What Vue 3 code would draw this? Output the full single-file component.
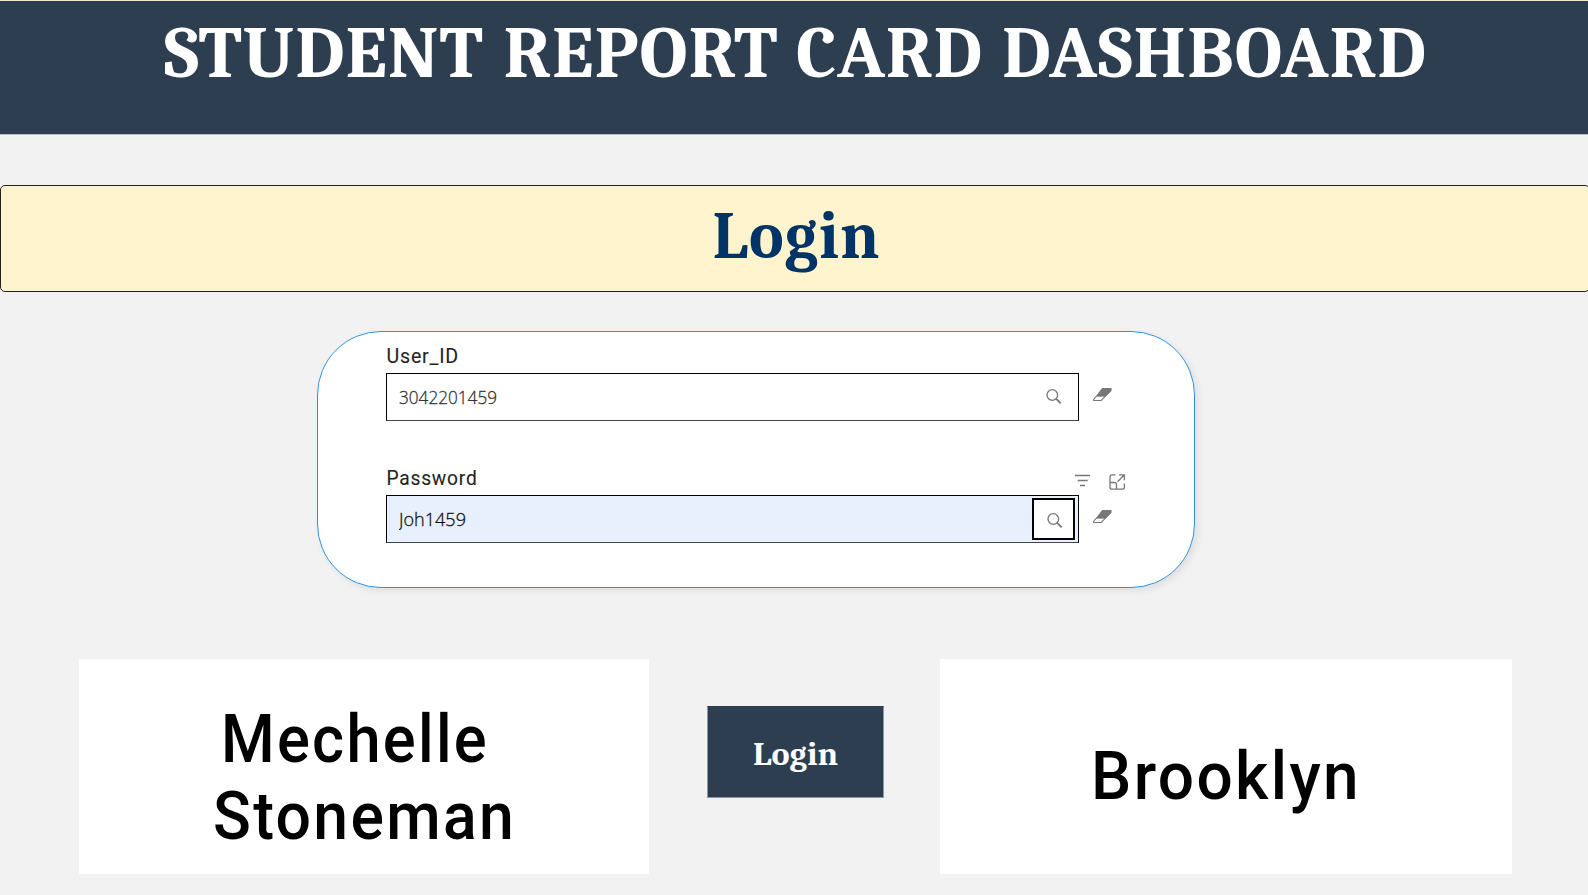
<script setup>
const titleWords = [
  { text: 'STUDENT', x: 164, width: 320 },
  { text: 'REPORT', x: 503.5, width: 275 },
  { text: 'CARD', x: 796, width: 187 },
  { text: 'DASHBOARD', x: 1002, width: 425 },
]

const fields = [
  { label: 'User_ID', labelWidth: 72.5, value: '3042201459', valueWidth: 98, active: false },
  { label: 'Password', labelWidth: 91, value: 'Joh1459', valueWidth: 67, active: true },
]
</script>

<template>
  <main class="page">
    <header class="header">
      <svg class="title" width="1588" height="132" role="heading">
        <text v-for="w in titleWords" :key="w.text" :x="w.x" y="76" :textLength="w.width" lengthAdjust="spacingAndGlyphs">{{ w.text }}</text>
      </svg>
    </header>

    <section class="banner">
      <svg width="1586" height="104" role="heading">
        <text x="711.5" y="71.5" textLength="168" lengthAdjust="spacingAndGlyphs">Login</text>
      </svg>
    </section>

    <section class="card">
      <div v-for="f in fields" :key="f.label" class="field">
        <div class="label-row">
          <svg class="label" width="120" height="30">
            <text x="-0.5" y="20.5" :textLength="f.labelWidth" lengthAdjust="spacingAndGlyphs">{{ f.label }}</text>
          </svg>
          <div v-if="f.active" class="tools">
            <svg width="16" height="16" viewBox="0 0 16 16"><path d="M0 1.500h15M2.700 6.500h10M5 11.500h5" /></svg>
            <svg width="17" height="17" viewBox="0 0 17 17">
              <path d="M6.500.8H3a2 2 0 0 0-2 2v10.400a2 2 0 0 0 2 2h10.400a2 2 0 0 0 2-2V9.500M1 8.500h4.500a2 2 0 0 1 2 2v4.700M8.500 7.700L15.200 1M10 .8h5.400v5.400" />
            </svg>
          </div>
        </div>
        <div class="input-row">
          <div class="input" :class="{ active: f.active }">
            <svg class="value" width="140" height="46">
              <text x="0" y="29.5" :textLength="f.valueWidth" lengthAdjust="spacingAndGlyphs">{{ f.value }}</text>
            </svg>
            <div class="search">
              <svg width="16" height="16" viewBox="0 0 16 16"><circle cx="6.300" cy="6" r="5.300" /><path class="handle" d="M10 9.700l4.600 4.600" /></svg>
            </div>
          </div>
          <svg class="eraser" width="19" height="14" viewBox="0 0 19 14">
            <path class="fill" d="M9.300.5H18v2.400L12.500 8.500H3.300z" />
            <path d="M4 7.700L.7 11.200v1.300h7.500L18 2.600V.6H9.500L4 7.700h8" />
          </svg>
        </div>
      </div>
    </section>

    <section class="bottom">
      <div class="tile name">
        <svg width="569" height="215">
          <text x="142" y="102.5" textLength="268" lengthAdjust="spacingAndGlyphs">Mechelle</text>
          <text x="134" y="179.5" textLength="303" lengthAdjust="spacingAndGlyphs">Stoneman</text>
        </svg>
      </div>
      <button class="login">
        <svg width="175" height="90">
          <text x="45" y="57.5" textLength="85" lengthAdjust="spacingAndGlyphs">Login</text>
        </svg>
      </button>
      <div class="tile city">
        <svg width="572" height="215">
          <text x="151" y="139.5" textLength="270" lengthAdjust="spacingAndGlyphs">Brooklyn</text>
        </svg>
      </div>
    </section>
  </main>
</template>

<style>
body { margin: 0; background: #f2f2f2; overflow: hidden; }
</style>

<style scoped>
* { box-sizing: border-box; }
svg { display: block; flex: none; }
.page { width: 1588px; height: 895px; background: #f2f2f2; border-top: 1px solid #f3e7ce; overflow: hidden; }
.header { height: 134px; background: #2d3e50; border-bottom: 1px solid #b5bdc9; }
.header text, .banner text, .login text { font-family: Cambria, Caladea, "DejaVu Serif Condensed", "DejaVu Serif", serif; font-weight: 700; }
.title text { font-size: 73.500px; fill: #fff; letter-spacing: 1px; }
.banner { width: 1590px; height: 107px; margin-top: 50px; background: #fff4cd; border: 1px solid #222; border-radius: 5px; }
.banner text { font-size: 66px; fill: #003366; letter-spacing: 1px; }
.card { width: 878px; height: 257px; margin: 39px 0 0 317px; padding: 10px 0 0 68px; background: #fff; border: 1px solid #2f93db; border-radius: 64px; box-shadow: 3px 3px 7px rgba(0, 0, 0, .08); }
.field { height: 122px; }
.label-row { display: flex; justify-content: space-between; width: 741px; height: 31px; padding-left: 1px; }
.label text { font-family: Roboto, sans-serif; font-size: 19.800px; letter-spacing: .8px; fill: #252423; stroke: #252423; stroke-width: .1px; }
.tools { display: flex; gap: 18px; padding: 10px 1px 0 0; }
.tools path { fill: none; stroke: #777; stroke-width: 1.300; }
.input-row { display: flex; align-items: flex-start; }
.input { display: flex; justify-content: space-between; width: 693px; height: 48px; padding-left: 12px; border: 1px solid #000; border-bottom-color: #444; }
.input.active { background: #e8f0fe; }
.value text { font-family: "Segoe UI", "Open Sans", "Noto Sans", sans-serif; font-size: 18.500px; font-weight: 300; fill: #333; stroke: #333; stroke-width: .3px; }
.active .value text { fill: #111; stroke: #111; }
.search { width: 43px; height: 42px; margin: 2px 3px 0 0; padding: 13px 0 0 14px; }
.active .search { background: #fff; border: 2px solid #000; padding: 13px 0 0 13px; }
.search circle, .search path { fill: none; stroke: #777; stroke-width: 1.300; }
.search .handle { stroke-width: 1.900; }
.eraser { margin: 15px 0 0 14px; }
.eraser path { fill: none; stroke: #777; stroke-width: 1.100; }
.eraser .fill { fill: #777; stroke: none; }
.bottom { display: flex; align-items: flex-start; margin: 71px 0 0 79px; }
.tile { height: 215px; background: #fff; }
.name { width: 570px; }
.city { width: 572px; }
.tile text { font-family: Roboto, sans-serif; font-size: 67.500px; font-weight: 500; letter-spacing: 2.500px; fill: #000; }
.login { width: 177px; height: 92px; margin: 47px 56px 0 58px; padding: 0; background: #2d3e50; border: 1px solid #8d98a6; border-top-color: #2d3e50; }
.login text { font-size: 33px; fill: #fff; }
</style>
